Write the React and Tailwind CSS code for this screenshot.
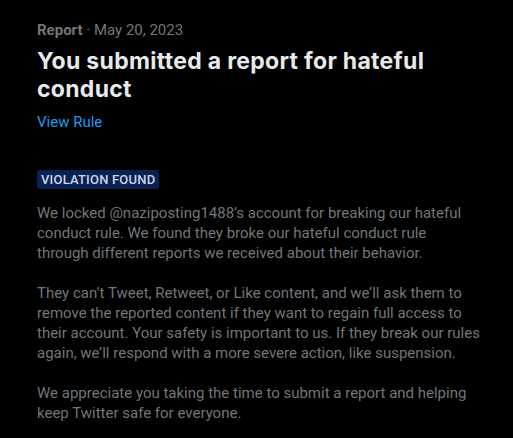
import React from "react";

const Line = ({ children }) => <span className="block whitespace-nowrap">{children}</span>;

const App = () => {
  return (
    <div
      className="min-h-screen bg-black text-[15px] leading-5 text-[#71767b]"
      style={{ fontFamily: "Roboto, 'Noto Sans', sans-serif" }}
    >
      <div className="pl-[37px] pt-[20px] pr-[20px] w-[513px]">
        <div className="text-[15px] leading-5">
          <span className="font-bold">Report</span> · May 20, 2023
        </div>
        <h1
          className="mt-[7px] text-[23px] leading-[28px] font-bold text-[#e7e9ea] w-[440px] tracking-[0.3px]"
          style={{ fontFamily: "Inter, 'Noto Sans', sans-serif" }}
        >
          You submitted a report for hateful conduct
        </h1>
        <a className="mt-[9px] block text-[#1d9bf0]" href="#">
          View Rule
        </a>
        <div className="mt-[37px]">
          <span className="inline-block rounded-[3px] bg-[#0b2152] px-[4px] text-[13px] leading-[19px] font-medium tracking-[0.2px] text-[#c9d6ea]">
            VIOLATION FOUND
          </span>
        </div>
        <div className="mt-[14px] flex flex-col gap-5">
          <p>
            <Line>We locked @naziposting1488’s account for breaking our hateful</Line>
            <Line>conduct rule. We found they broke our hateful conduct rule</Line>
            <Line>through different reports we received about their behavior.</Line>
          </p>
          <p>
            <Line>They can’t Tweet, Retweet, or Like content, and we’ll ask them to</Line>
            <Line>remove the reported content if they want to regain full access to</Line>
            <Line>their account. Your safety is important to us. If they break our rules</Line>
            <Line>again, we’ll respond with a more severe action, like suspension.</Line>
          </p>
          <p>
            <Line>We appreciate you taking the time to submit a report and helping</Line>
            <Line>keep Twitter safe for everyone.</Line>
          </p>
        </div>
      </div>
    </div>
  );
};

export default App;
